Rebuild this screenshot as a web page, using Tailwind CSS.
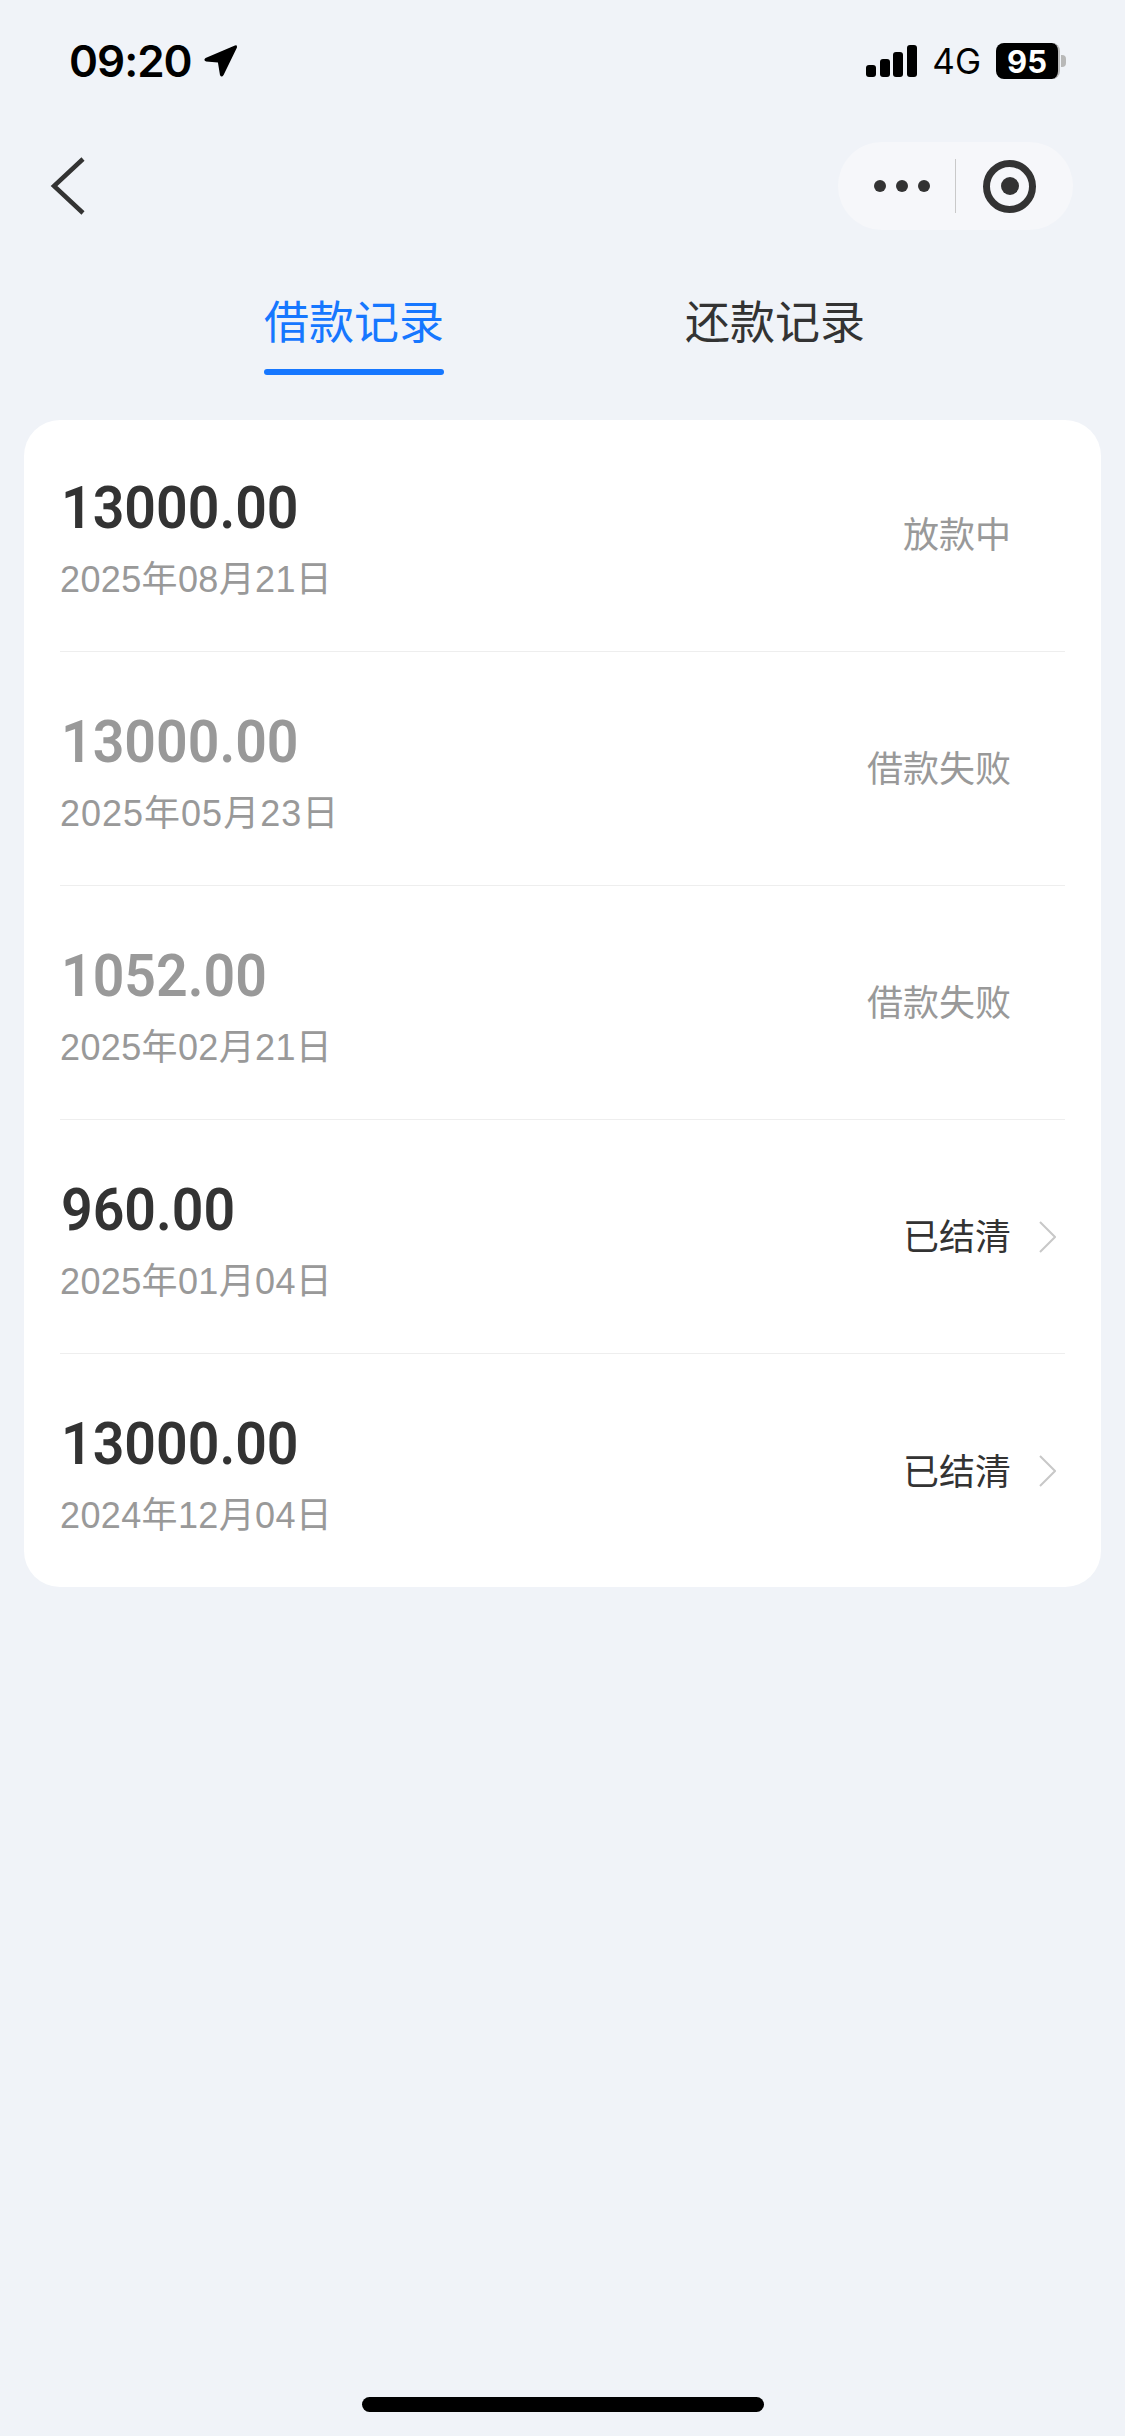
<!DOCTYPE html>
<html lang="zh-CN">
<head>
<meta charset="utf-8">
<script src="https://cdn.jsdelivr.net/npm/@tailwindcss/browser@4"></script>
</head>
<body class="m-0">
<div class="w-[1125px] h-[2436px] bg-[#f0f3f8] relative overflow-hidden flex flex-col font-['Liberation_Sans','Noto_Sans_CJK_SC',sans-serif]">
  <!-- status bar -->
  <div class="h-[122px] flex items-center justify-between pl-[69px] pr-[59px]">
    <div class="flex items-center gap-[11px]">
      <span class="font-['Inter',sans-serif] font-semibold text-[44px] leading-none tracking-[-1px] text-black">09:20</span>
      <svg class="w-[35px] h-[35px]" viewBox="0 0 34 34"><path d="M31 1.500 Q33.500 0.500 33 3.500 L20 30 Q18 33 16.500 30 L14.500 18 L3 17 Q0 15.500 2.500 13.500 Z" fill="#000"/></svg>
    </div>
    <div class="flex items-center">
      <svg class="w-[51px] h-[32px]" viewBox="0 0 51 32"><rect x="0" y="20" width="10" height="12" rx="3" fill="#000"/><rect x="14" y="14" width="10" height="18" rx="3" fill="#000"/><rect x="27" y="7" width="10" height="25" rx="3" fill="#000"/><rect x="41" y="0" width="10" height="32" rx="3" fill="#000"/></svg>
      <span class="ml-[15px] font-['Inter',sans-serif] text-[35px] leading-none text-black">4G</span>
      <div class="ml-[15px] flex items-center">
        <div class="w-[64px] h-[36px] bg-black rounded-[8px] border-r-[2px] border-[#b8b8b8] flex items-center justify-center font-['Inter',sans-serif] font-bold text-[31px] leading-none text-white">95</div>
        <div class="w-[5px] h-[12px] bg-[#b8b8b8] rounded-r-[4px] ml-[1px]"></div>
      </div>
    </div>
  </div>
  <div class="h-[20px]"></div>
  <!-- nav -->
  <div class="h-[88px] flex items-center justify-between pl-[50px] pr-[52px]">
    <svg class="w-[36px] h-[58px]" viewBox="0 0 36 58"><path d="M33 2 L4 29 L33 56" fill="none" stroke="#333" stroke-width="4.500"/></svg>
    <div class="w-[235px] h-[88px] rounded-full bg-[#f6f7fa] flex items-center pl-[36px]">
      <div class="flex gap-[10px]"><span class="w-[12px] h-[12px] rounded-full bg-[#333]"></span><span class="w-[12px] h-[12px] rounded-full bg-[#333]"></span><span class="w-[12px] h-[12px] rounded-full bg-[#333]"></span></div>
      <div class="w-px h-[54px] bg-[#c9c9c9] ml-[25px]"></div>
      <div class="ml-[27px] w-[53px] h-[53px] rounded-full border-[7px] border-[#333] flex items-center justify-center"><span class="w-[18px] h-[18px] rounded-full bg-[#333]"></span></div>
    </div>
  </div>
  <!-- tabs -->
  <div class="h-[190px] flex pl-[264px] pt-[64px] gap-[241px]">
    <div class="flex flex-col items-center">
      <span class="text-[45px] leading-[60px] text-[#1677ff]">借款记录</span>
      <span class="w-[180px] h-[6px] mt-[15px] rounded-full bg-[#1677ff]"></span>
    </div>
    <div class="flex flex-col items-center">
      <span class="text-[45px] leading-[60px] text-[#333]">还款记录</span>
    </div>
  </div>
  <!-- card -->
  <div class="mx-[24px] h-[1167px] bg-white rounded-[36px] px-[36px]">
    <div class="-mt-[2px] relative">
      <div class="h-[234px] flex items-center justify-between border-b border-[#eeeeee]">
        <div class="flex flex-col items-start pt-[9px]">
          <span class="ml-[1px] font-['Roboto',sans-serif] font-semibold text-[59px] leading-[62px] origin-left scale-x-[0.94] text-[#333]">13000.00</span>
          <span class="text-[36px] leading-[44px] mt-[19px] tracking-[0.37px] text-[#999]">2025年08月21日</span>
        </div>
        <span class="text-[36px] leading-[44px] pt-[3px] text-[#999] mr-[54px]">放款中</span>
      </div>
      <div class="h-[234px] flex items-center justify-between border-b border-[#eeeeee]">
        <div class="flex flex-col items-start pt-[9px]">
          <span class="ml-[1px] font-['Roboto',sans-serif] font-semibold text-[59px] leading-[62px] origin-left scale-x-[0.94] text-[#999]">13000.00</span>
          <span class="text-[36px] leading-[44px] mt-[19px] tracking-[1px] text-[#999]">2025年05月23日</span>
        </div>
        <span class="text-[36px] leading-[44px] pt-[3px] text-[#999] mr-[54px]">借款失败</span>
      </div>
      <div class="h-[234px] flex items-center justify-between border-b border-[#eeeeee]">
        <div class="flex flex-col items-start pt-[9px]">
          <span class="ml-[1px] font-['Roboto',sans-serif] font-semibold text-[59px] leading-[62px] origin-left scale-x-[0.94] text-[#999]">1052.00</span>
          <span class="text-[36px] leading-[44px] mt-[19px] tracking-[0.37px] text-[#999]">2025年02月21日</span>
        </div>
        <span class="text-[36px] leading-[44px] pt-[3px] text-[#999] mr-[54px]">借款失败</span>
      </div>
      <div class="h-[234px] flex items-center justify-between border-b border-[#eeeeee]">
        <div class="flex flex-col items-start pt-[9px]">
          <span class="ml-[1px] font-['Roboto',sans-serif] font-semibold text-[59px] leading-[62px] origin-left scale-x-[0.94] text-[#333]">960.00</span>
          <span class="text-[36px] leading-[44px] mt-[19px] tracking-[0.37px] text-[#999]">2025年01月04日</span>
        </div>
        <div class="flex items-center gap-[28px] mr-[9px]">
          <span class="text-[36px] leading-[44px] pt-[3px] text-[#333]">已结清</span>
          <svg class="w-[17px] h-[32px]" viewBox="0 0 17 32"><path d="M1 1 L16 16 L1 31" fill="none" stroke="#c8c8c8" stroke-width="2"/></svg>
        </div>
      </div>
      <div class="h-[234px] flex items-center justify-between">
        <div class="flex flex-col items-start pt-[9px]">
          <span class="ml-[1px] font-['Roboto',sans-serif] font-semibold text-[59px] leading-[62px] origin-left scale-x-[0.94] text-[#333]">13000.00</span>
          <span class="text-[36px] leading-[44px] mt-[19px] tracking-[0.37px] text-[#999]">2024年12月04日</span>
        </div>
        <div class="flex items-center gap-[28px] mr-[9px]">
          <span class="text-[36px] leading-[44px] pt-[3px] text-[#333]">已结清</span>
          <svg class="w-[17px] h-[32px]" viewBox="0 0 17 32"><path d="M1 1 L16 16 L1 31" fill="none" stroke="#c8c8c8" stroke-width="2"/></svg>
        </div>
      </div>
    </div>
  </div>
  <!-- home indicator -->
  <div class="absolute left-[362px] top-[2397px] w-[402px] h-[15px] rounded-full bg-black"></div>
</div>
</body>
</html>
